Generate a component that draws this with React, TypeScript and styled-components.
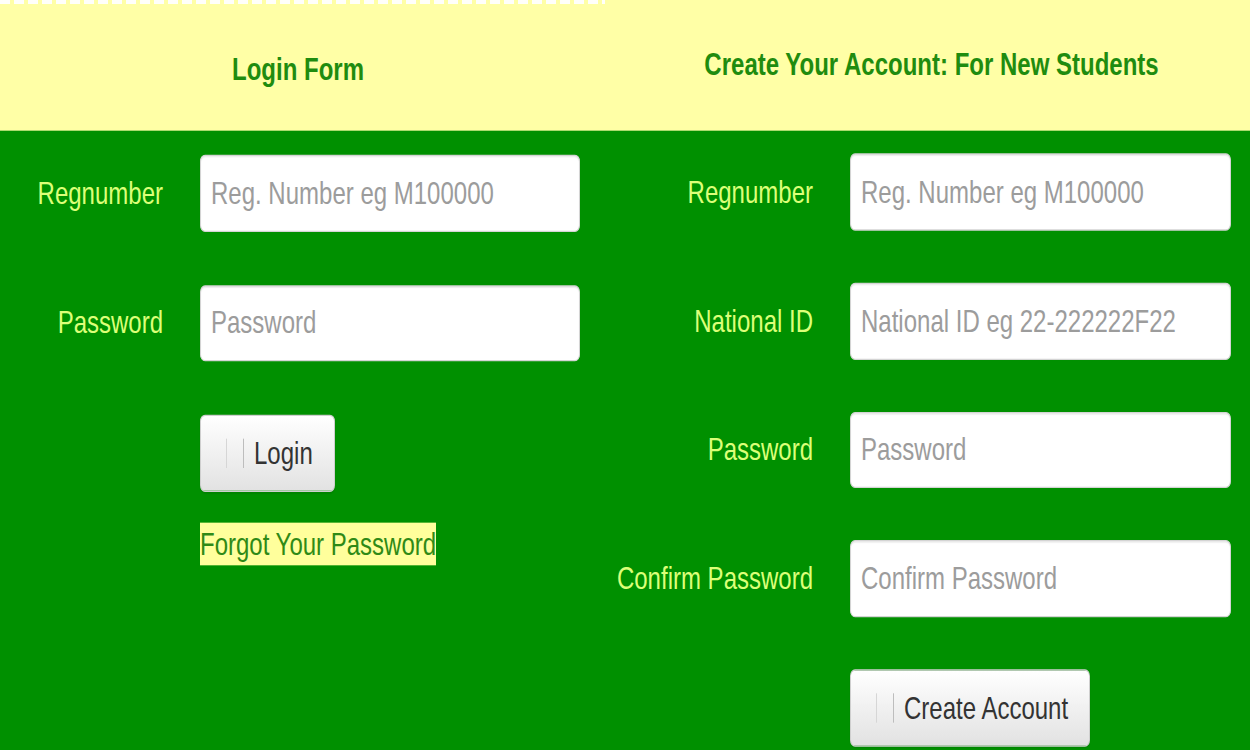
import { createGlobalStyle } from "styled-components";
import styled from "styled-components";

const GlobalStyle = createGlobalStyle`
  html {
    overflow: hidden;
    background: #009000;
  }
  body {
    margin: 0;
    padding: 0;
    min-height: 750px;
    background: #009000;
  }
`;

type Field = { label: string; placeholder: string; type?: string };

const loginFields: Field[] = [
  { label: "Regnumber", placeholder: "Reg. Number eg M100000" },
  { label: "Password", placeholder: "Password", type: "password" },
];

const signupFields: Field[] = [
  { label: "Regnumber", placeholder: "Reg. Number eg M100000" },
  { label: "National ID", placeholder: "National ID eg 22-222222F22" },
  { label: "Password", placeholder: "Password", type: "password" },
  { label: "Confirm Password", placeholder: "Confirm Password", type: "password" },
];

const App = () => {
  return (
    <>
      <GlobalStyle />
      <Stage>
        <Header>
          <Dashes />
          <HeadRow>
            <Heading $top={35} $shift={29}>
              Login Form
            </Heading>
            <Heading $top={31} $shift={12}>
              Create Your Account: For New Students
            </Heading>
          </HeadRow>
        </Header>
        <Body>
          <Panel $top={18}>
            <FormGrid $labelWidth={163} $inputWidth={380} $rowGap={39.75}>
              {loginFields.map((f, i) => (
                <FieldRow key={i} field={f} />
              ))}
              <Actions>
                <Button type="button">
                  <IconStub />
                  Login
                </Button>
                <ForgotLink href="#">Forgot Your Password</ForgotLink>
              </Actions>
            </FormGrid>
          </Panel>
          <Panel $top={17}>
            <FormGrid $labelWidth={188} $inputWidth={381} $rowGap={39}>
              {signupFields.map((f, i) => (
                <FieldRow key={i} field={f} />
              ))}
              <Actions>
                <Button type="button">
                  <IconStub />
                  Create Account
                </Button>
              </Actions>
            </FormGrid>
          </Panel>
        </Body>
      </Stage>
    </>
  );
};

const FieldRow = ({ field }: { field: Field }) => (
  <>
    <Label>{field.label}</Label>
    <Input type={field.type || "text"} placeholder={field.placeholder} />
  </>
);

export default App;

// the screenshot is stretched vertically, so the whole page is scaled on Y
const Stage = styled.div`
  width: 1250px;
  height: 563px;
  background: #009000;
  transform: scaleY(1.3333);
  transform-origin: top left;
  font-family: "Liberation Sans", Arial, sans-serif;
`;

const Header = styled.div`
  display: flex;
  flex-direction: column;
  height: 98px;
  background: #ffffa6;
`;

const Dashes = styled.div`
  width: 605px;
  height: 3px;
  background: repeating-linear-gradient(
    90deg,
    rgba(255, 255, 255, 0.95) 0 10px,
    transparent 10px 14px
  );
`;

const HeadRow = styled.div`
  display: grid;
  grid-template-columns: 625px 625px;
`;

const Heading = styled.h2<{ $top: number; $shift: number }>`
  margin: 0;
  padding-top: ${({ $top }) => $top}px;
  padding-right: ${({ $shift }) => $shift}px;
  font-size: 24px;
  font-weight: bold;
  line-height: normal;
  text-align: center;
  color: #1f8c0f;
`;

const Body = styled.div`
  display: grid;
  grid-template-columns: 625px 625px;
`;

const Panel = styled.div<{ $top: number }>`
  padding-top: ${({ $top }) => $top}px;
`;

const FormGrid = styled.div<{
  $labelWidth: number;
  $inputWidth: number;
  $rowGap: number;
}>`
  display: grid;
  grid-template-columns: ${({ $labelWidth, $inputWidth }) =>
    `${$labelWidth}px ${$inputWidth}px`};
  column-gap: 37px;
  row-gap: ${({ $rowGap }) => $rowGap}px;
  align-items: center;
`;

const Label = styled.label`
  display: flex;
  justify-content: flex-end;
  white-space: nowrap;
  font-size: 24px;
  line-height: normal;
  color: #dcff78;
`;

const Input = styled.input`
  box-sizing: border-box;
  width: 100%;
  height: 57.75px;
  padding: 0 10px;
  font-family: inherit;
  font-size: 24px;
  color: #555;
  background: #fff;
  border: 1px solid #d4d4d4;
  border-radius: 5px;
  box-shadow: inset 0 1px 1px rgba(0, 0, 0, 0.08);
  outline: none;

  &::placeholder {
    color: #9c9c9c;
  }
`;

const Actions = styled.div`
  grid-column: 2;
  display: flex;
  flex-direction: column;
  align-items: flex-start;
  gap: 23.25px;
`;

const Button = styled.button`
  display: flex;
  align-items: center;
  gap: 10px;
  height: 57.75px;
  padding: 0 21px 0 25px;
  font-family: inherit;
  font-size: 24px;
  color: #333;
  background: linear-gradient(to bottom, #ffffff 0%, #e2e2e2 100%);
  border: 1px solid #cfcfcf;
  border-radius: 5px;
  box-shadow: 0 1px 1px rgba(0, 0, 0, 0.08);
  cursor: pointer;
`;

const IconStub = styled.span`
  box-sizing: border-box;
  width: 18px;
  height: 22.5px;
  border-left: 1.5px solid #d6d6d6;
  border-right: 1.5px solid #bdbdbd;
`;

const ForgotLink = styled.a`
  font-size: 24px;
  line-height: 31.5px;
  color: #2f8a16;
  background: #ffff9c;
  text-decoration: none;
`;
